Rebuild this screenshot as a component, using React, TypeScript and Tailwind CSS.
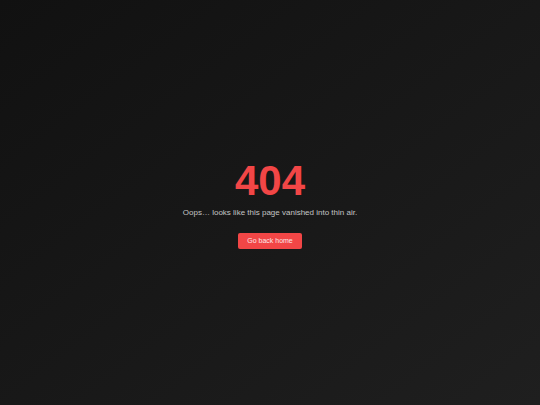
import React from "react";

export default function App() {
  return (
    <div
      className="min-h-screen w-full flex flex-col items-center justify-center pt-[4px] bg-linear-to-br from-[#111111] to-[#1f1f1f]"
      style={{ fontFamily: '"Liberation Sans", Arial, sans-serif' }}
    >
      <h1 className="text-[42px] leading-none font-bold text-[#f24646]">404</h1>
      <p className="mt-[5px] text-[8px] leading-[12px] text-[#c4c4c4]">
        Oops… looks like this page vanished into thin air.
      </p>
      <button className="mt-[14px] mb-[1px] h-[16px] px-[9px] rounded-[2px] bg-[#f24646] text-[7px] leading-[16px] text-[#fde8e8]">
        Go back home
      </button>
    </div>
  );
}
